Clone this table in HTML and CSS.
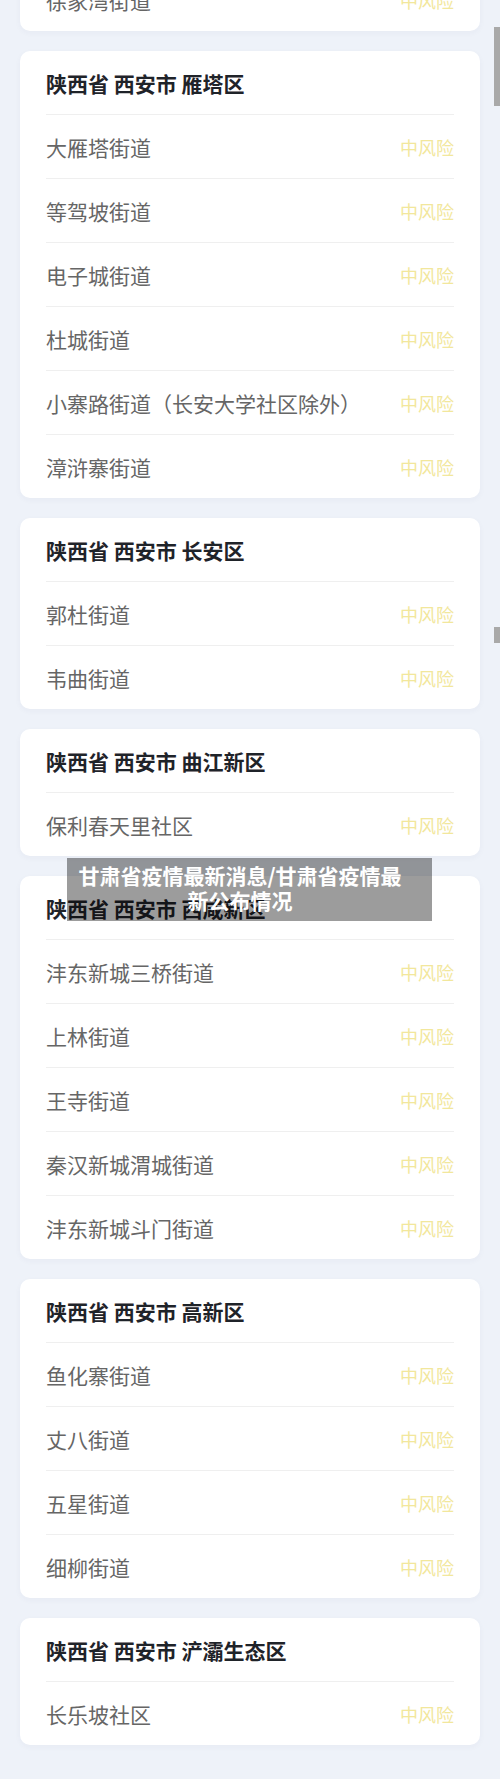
FILE: index.html
```html
<!DOCTYPE html>
<html lang="zh-CN">
<head>
<meta charset="utf-8">
<title>甘肃省疫情最新消息</title>
<link rel="stylesheet" href="styles.css">
</head>
<body>
<div class="list">
  <div class="card">
    <div class="row"><span class="name">徐家湾街道</span><span class="risk">中风险</span></div>
  </div>
  <div class="card">
    <div class="head">陕西省 西安市 雁塔区</div>
    <div class="row"><span class="name">大雁塔街道</span><span class="risk">中风险</span></div>
    <div class="row"><span class="name">等驾坡街道</span><span class="risk">中风险</span></div>
    <div class="row"><span class="name">电子城街道</span><span class="risk">中风险</span></div>
    <div class="row"><span class="name">杜城街道</span><span class="risk">中风险</span></div>
    <div class="row"><span class="name">小寨路街道（长安大学社区除外）</span><span class="risk">中风险</span></div>
    <div class="row"><span class="name">漳浒寨街道</span><span class="risk">中风险</span></div>
  </div>
  <div class="card">
    <div class="head">陕西省 西安市 长安区</div>
    <div class="row"><span class="name">郭杜街道</span><span class="risk">中风险</span></div>
    <div class="row"><span class="name">韦曲街道</span><span class="risk">中风险</span></div>
  </div>
  <div class="card">
    <div class="head">陕西省 西安市 曲江新区</div>
    <div class="row"><span class="name">保利春天里社区</span><span class="risk">中风险</span></div>
  </div>
  <div class="card">
    <div class="head">陕西省 西安市 西咸新区</div>
    <div class="row"><span class="name">沣东新城三桥街道</span><span class="risk">中风险</span></div>
    <div class="row"><span class="name">上林街道</span><span class="risk">中风险</span></div>
    <div class="row"><span class="name">王寺街道</span><span class="risk">中风险</span></div>
    <div class="row"><span class="name">秦汉新城渭城街道</span><span class="risk">中风险</span></div>
    <div class="row"><span class="name">沣东新城斗门街道</span><span class="risk">中风险</span></div>
  </div>
  <div class="card">
    <div class="head">陕西省 西安市 高新区</div>
    <div class="row"><span class="name">鱼化寨街道</span><span class="risk">中风险</span></div>
    <div class="row"><span class="name">丈八街道</span><span class="risk">中风险</span></div>
    <div class="row"><span class="name">五星街道</span><span class="risk">中风险</span></div>
    <div class="row"><span class="name">细柳街道</span><span class="risk">中风险</span></div>
  </div>
  <div class="card">
    <div class="head">陕西省 西安市 浐灞生态区</div>
    <div class="row"><span class="name">长乐坡社区</span><span class="risk">中风险</span></div>
  </div>
</div>
<div class="scroll-thumb thumb-top"></div>
<div class="scroll-thumb thumb-mid"></div>
<div class="caption"><div class="caption-text">甘肃省疫情最新消息/甘肃省疫情最新公布情况</div></div>
</body>
</html>
```

FILE: styles.css
```css
html, body {
  margin: 0;
  padding: 0;
}
body {
  background: #eef2f9;
  font-family: "Noto Sans CJK SC", "Noto Sans", sans-serif;
  position: relative;
  width: 500px;
  height: 1779px;
  overflow: hidden;
}
.list {
  display: flex;
  flex-direction: column;
  gap: 20px;
  padding: 0 20px 34px;
  margin-top: -33px;
}
.card {
  background: #ffffff;
  border-radius: 10px;
  padding: 0 26px;
  box-shadow: 0 2px 6px rgba(40, 60, 100, 0.04);
}
.head {
  box-sizing: border-box;
  height: 63px;
  padding-top: 1px;
  display: flex;
  align-items: center;
  font-size: 21px;
  font-weight: 700;
  color: #1f2329;
  line-height: 1;
}
.row {
  box-sizing: border-box;
  height: 64px;
  padding-top: 1px;
  border-top: 1px solid #efefef;
  display: flex;
  align-items: center;
  justify-content: space-between;
  line-height: 1;
}
.name {
  font-size: 21px;
  color: #666666;
}
.risk {
  font-size: 18px;
  color: #f2e79c;
}
.scroll-thumb {
  position: absolute;
  left: 494px;
  width: 6px;
  background: #a9a9a9;
}
.thumb-top {
  top: 27px;
  height: 79px;
}
.thumb-mid {
  top: 627px;
  height: 16px;
}
.caption {
  position: absolute;
  left: 67px;
  top: 858px;
  width: 365px;
  height: 63px;
  background: rgba(0, 0, 0, 0.39);
}
.caption-text {
  width: 330px;
  margin-left: 8px;
  padding-top: 5px;
  text-align: center;
  font-size: 21px;
  font-weight: 700;
  line-height: 25px;
  color: #ffffff;
}
```
